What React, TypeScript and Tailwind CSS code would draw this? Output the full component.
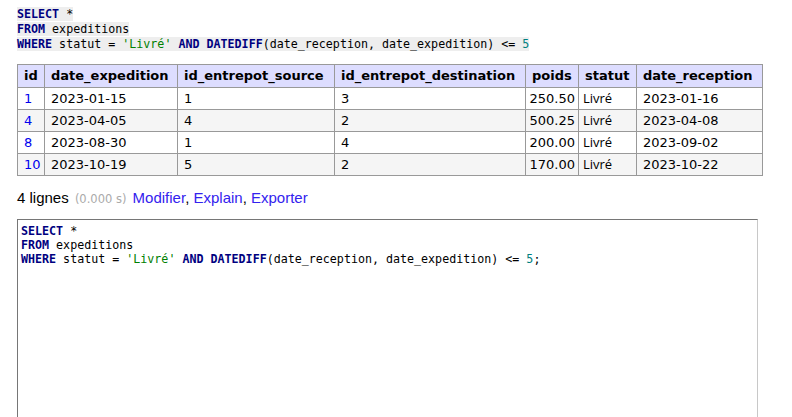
const rows = [
  { id: "1", exp: "2023-01-15", src: "1", dst: "3", poids: "250.50", statut: "Livré", rec: "2023-01-16" },
  { id: "4", exp: "2023-04-05", src: "4", dst: "2", poids: "500.25", statut: "Livré", rec: "2023-04-08" },
  { id: "8", exp: "2023-08-30", src: "1", dst: "4", poids: "200.00", statut: "Livré", rec: "2023-09-02" },
  { id: "10", exp: "2023-10-19", src: "5", dst: "2", poids: "170.00", statut: "Livré", rec: "2023-10-22" },
];

const headers = ["id", "date_expedition", "id_entrepot_source", "id_entrepot_destination", "poids", "statut", "date_reception"];
const colW = ["w-[27px]", "w-[133px]", "w-[157px]", "w-[191px]", "w-[53px]", "w-[58px]", "w-[126px]"];

const Kw = ({ children }: { children: React.ReactNode }) => (
  <span className="text-[#000080] font-bold">{children}</span>
);

const Sql = ({ semi }: { semi?: boolean }) => (
  <>
    <Kw>SELECT</Kw> *{"\n"}
    <Kw>FROM</Kw> expeditions{"\n"}
    <Kw>WHERE</Kw> statut = <span className="text-[#008000]">'Livré'</span> <Kw>AND</Kw> <Kw>DATEDIFF</Kw>
    (date_reception, date_expedition) &lt;= <span className="text-[#008080]">5</span>
    {semi ? ";" : ""}
  </>
);

export default function App() {
  return (
    <div className="w-[792px] h-[417px] overflow-hidden bg-white pl-[17px] pt-[7px] font-['DejaVu_Sans',Verdana,sans-serif] text-[13px] text-black">
      {/* query */}
      <div className="font-['DejaVu_Sans_Mono',monospace] text-[11.66px] leading-[15px]">
        <code className="bg-[#eeeeee] whitespace-pre-wrap font-['DejaVu_Sans_Mono',monospace] text-[11.66px] leading-[15px]">
          <Sql />
        </code>
      </div>

      {/* results */}
      <table className="mt-[12px] w-[745px] table-fixed border-collapse border border-[#999]">
        <colgroup>
          {colW.map((w, i) => (
            <col key={i} className={w} />
          ))}
        </colgroup>
        <thead>
          <tr className="bg-[#ddddff]">
            {headers.map((h) => (
              <th key={h} className="border border-[#999] px-[6px] h-[23px] text-left font-bold whitespace-nowrap overflow-hidden">
                {h}
              </th>
            ))}
          </tr>
        </thead>
        <tbody>
          {rows.map((r, i) => (
            <tr key={r.id} className={i % 2 ? "bg-[#f5f5f5]" : "bg-white"}>
              <td className="border border-[#999] px-[6px] h-[22px] text-[#0000ee]">{r.id}</td>
              <td className="border border-[#999] px-[6px]">{r.exp}</td>
              <td className="border border-[#999] px-[6px]">{r.src}</td>
              <td className="border border-[#999] px-[6px]">{r.dst}</td>
              <td className="border border-[#999] px-[3px] text-right">{r.poids}</td>
              <td className="border border-[#999] px-[4px] font-['Open_Sans',sans-serif]">{r.statut}</td>
              <td className="border border-[#999] px-[6px]">{r.rec}</td>
            </tr>
          ))}
        </tbody>
      </table>

      <p className="mt-[12px] font-['Liberation_Sans',Arial,sans-serif] text-[15px] leading-[20px]">
        4 lignes{" "}
        <span className="mx-[2px] font-['DejaVu_Sans',sans-serif] text-[11.5px] text-[#aaaaaa]">(0.000 s)</span>{" "}
        <span className="text-[#3322ee]">Modifier</span>,{" "}
        <span className="text-[#3322ee]">Explain</span>,{" "}
        <span className="text-[#3322ee]">Exporter</span>
      </p>

      <div className="mt-[10px] w-[741px] h-[220px] border border-[#767676] border-r-[#c8c8c8] px-[3px] pt-[4px] font-['DejaVu_Sans_Mono',monospace] text-[11.66px] leading-[14px] whitespace-pre-wrap">
        <Sql semi />
      </div>
    </div>
  );
}
